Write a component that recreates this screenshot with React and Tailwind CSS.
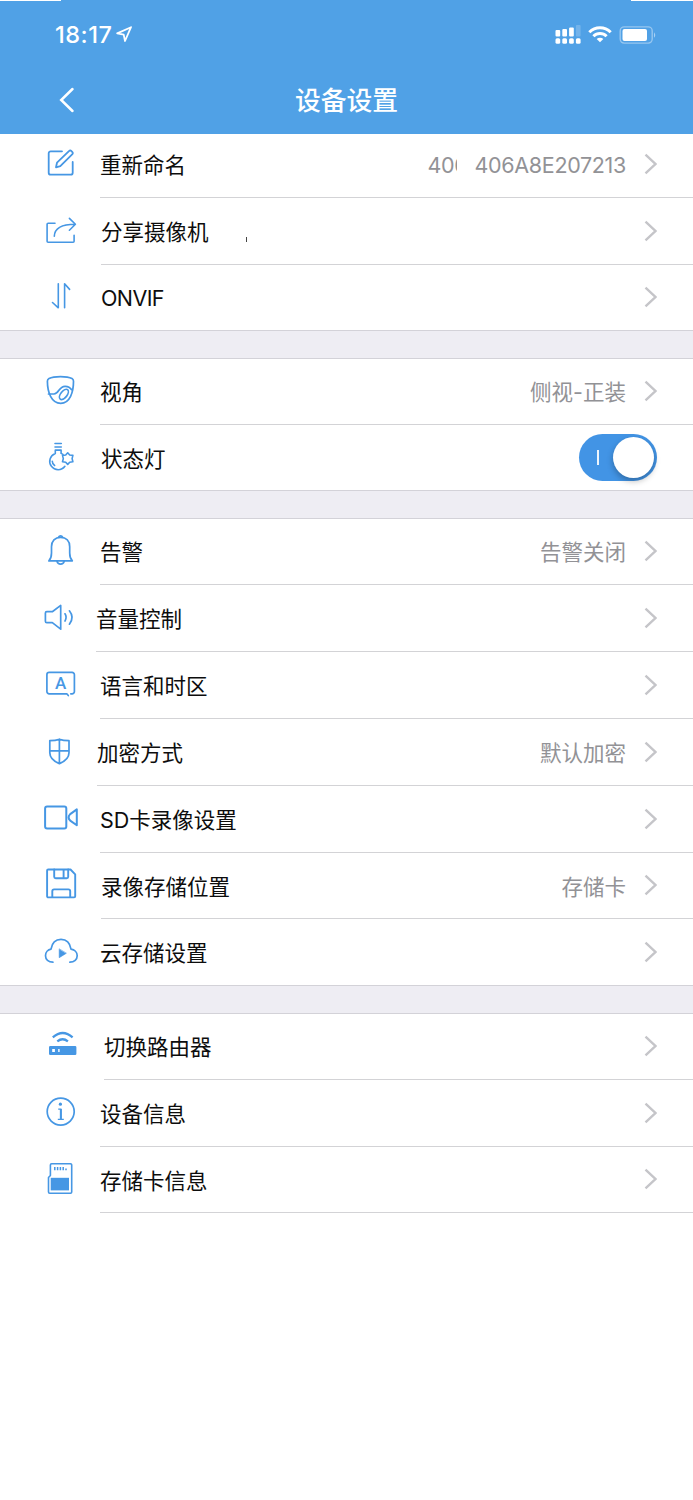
import React from "react";

function Icon({ children, width = 1.5 }) {
  return (
    <svg
      viewBox="0 0 40 40"
      className="mb-[14px] h-10 w-10 shrink-0 self-end text-[#4697e4]"
      fill="none"
      stroke="currentColor"
      strokeWidth={width}
      strokeLinecap="round"
      strokeLinejoin="round"
    >
      {children}
    </svg>
  );
}

const EditIcon = () => (
  <Icon width={1.8}>
    <path d="M22 7.3H10.7a2 2 0 0 0-2 2v19.4a2 2 0 0 0 2 2h20a2 2 0 0 0 2-2V18" />
    <path d="M16 23.3l1-4.6L29.2 6.9a1.4 1.4 0 0 1 2 0l1.2 1.2a1.4 1.4 0 0 1 0 2L20.3 22.2z" />
  </Icon>
);

const ShareIcon = () => (
  <Icon width={1.6}>
    <path d="M15 12.3H8.1a1 1 0 0 0-1 1v16.9a1 1 0 0 0 1 1h25a1 1 0 0 0 1-1V24.3" />
    <path d="M14.3 25.3C14.6 17.2 21.4 13.3 35.2 13.3M29.4 7.4l6 5.9-6 5.9" />
  </Icon>
);

const OnvifIcon = () => (
  <Icon width={1.6}>
    <path d="M18.3 6.8V30.8L12.5 25.5M24.6 30.8V6.8l5 5.6" />
  </Icon>
);

const AngleIcon = () => (
  <Icon width={1.7}>
    <path d="M9 7.6C14 5 27 5 32 7.6Q33.5 8.400 33.500 10.300C33.500 21 30 32.300 20.700 32.300S7.400 21 7.400 10.300Q7.400 8.400 9 7.600z" />
    <path d="M8.500 23h5.500C19 23 18.500 15.500 25 15.300c3.500-.1 5.200 1.200 6.600 3.400" />
    <ellipse cx="23.900" cy="23.400" rx="3.200" ry="6" transform="rotate(38 23.900 23.400)" />
  </Icon>
);

const LampIcon = () => (
  <Icon width={1.6}>
    <path d="M15 6.500h6.300M15 10h6.300M15.300 13.100h5.800M15.300 13.200v3.200a8.400 8.400 0 1 0 9.600 12.900M21.100 13.200v3.200l1.900 1" />
    <path d="M12.300 24.300a5 5 0 0 0 2.300 4.200" />
    <path d="M27.700 15.800l2 2.200 3.200.4-.8 3.200.8 3.200-3.200.4-2 2.200-2-2.200-3.200-.4.8-3.200-.8-3.200 3.200-.4z" />
  </Icon>
);

const BellIcon = () => (
  <Icon width={1.700}>
    <path d="M8.900 29.900c2-2.200 2.600-4.500 2.600-8v-6.200c0-5.800 3.500-9.400 9.100-9.400s9.100 3.600 9.100 9.400v6.200c0 3.500.6 5.800 2.600 8z" />
    <path d="M18.600 6.200a2.200 2.200 0 0 1 4 0M17 30.300a3.700 3.700 0 0 0 7.200 0" />
  </Icon>
);

const VolumeIcon = () => (
  <Icon width={1.700}>
    <path d="M6.800 13.700h5.500l8.400-6.300v23.800l-8.400-6.500H6.800a1.400 1.400 0 0 1-1.400-1.400v-8.200a1.400 1.400 0 0 1 1.400-1.400z" />
    <path d="M25 15.800q2.200 3.500 0 7.200M29.400 12.800q5.400 6.700 0 13.400" />
  </Icon>
);

const LanguageIcon = () => (
  <Icon width={1.700}>
    <path d="M28.300 30.500l-1.500-1.700H9.200a2.300 2.300 0 0 1-2.300-2.300V9.700a2.300 2.300 0 0 1 2.300-2.300h22.900a2.300 2.300 0 0 1 2.300 2.300v16.800a2.300 2.300 0 0 1-2.300 2.300h-1.300" />
    <text x="20.600" y="24.300" fontSize="17" fontWeight="500" textAnchor="middle" fill="currentColor" stroke="none" className="font-['Roboto',sans-serif]">A</text>
  </Icon>
);

const ShieldIcon = () => (
  <Icon width={1.700}>
    <path d="M19.400 7.200c3 1.200 6 1.500 9.600 1.500v12c0 5-4 8.500-9.600 10.900C13.800 29.200 9.800 25.700 9.800 20.700v-12c3.600 0 6.600-.3 9.600-1.500zM19.400 7.200v24.400M9.800 18.900H29" />
  </Icon>
);

const VideoIcon = () => (
  <Icon width={2}>
    <rect x="5.100" y="7.600" width="21.200" height="21.900" rx="2" />
    <path d="M36.800 10.400v15.900l-6.600-4.700q-3.200-3.200 0-6.500z" />
  </Icon>
);

const FloppyIcon = () => (
  <Icon width={1.900}>
    <path d="M8.200 4.500h22.300l4.700 4.900v21.900a1.100 1.100 0 0 1-1.100 1.100H8.200a1.100 1.100 0 0 1-1.100-1.100V5.600a1.100 1.100 0 0 1 1.100-1.100z" />
    <path d="M14.200 4.500v7.300a1.500 1.500 0 0 0 1.500 1.500h11a1.500 1.500 0 0 0 1.500-1.500V4.500M23.600 5v8M12.300 32v-5.800a1.800 1.800 0 0 1 1.800-1.800h14.300a1.800 1.800 0 0 1 1.800 1.800V32" />
  </Icon>
);

const CloudIcon = () => (
  <Icon width={1.700}>
    <path d="M12.900 30.200C8.400 30.200 5.500 27.300 5.500 23.700c0-3.500 2.500-6 5.500-6.500C12 11 15.800 7.400 21 7.400s9 3.600 10 9.800c3.500.5 6.200 3 6.200 6.500 0 3.600-2.900 6.500-7.300 6.500" />
    <path d="M19.200 17.200v8.500l6.900-4.300z" fill="currentColor" strokeWidth="0.600" />
  </Icon>
);

const RouterIcon = () => (
  <Icon width={2.300}>
    <path d="M12.800 11.300q9.900-8.700 19.800 0M17.300 15.400q5.300-4.200 10.600 0" strokeLinecap="butt" />
    <path fillRule="evenodd" clipRule="evenodd" d="M10.300 19.900h24.800a1.300 1.300 0 0 1 1.300 1.300v6.600a1.300 1.300 0 0 1-1.300 1.300H10.300A1.300 1.300 0 0 1 9 27.800v-6.600a1.300 1.300 0 0 1 1.300-1.300zM12.200 23v3h2.700v-3zM18.200 23v3h1.400v-3z" fill="currentColor" stroke="none" />
  </Icon>
);

const InfoIcon = () => (
  <Icon width={1.700}>
    <circle cx="20.700" cy="18.600" r="13.500" />
    <circle cx="20.400" cy="11.200" r="1.600" fill="currentColor" stroke="none" />
    <path d="M18.200 16.200h2.900v9.900M17.800 26.400h6" strokeWidth="1.300" strokeLinecap="butt" />
    <path d="M20.800 16v10" strokeWidth="1.900" strokeLinecap="butt" />
  </Icon>
);

const CardIcon = () => (
  <Icon width={1.600}>
    <path d="M11.600 4.700h18.900a1.200 1.200 0 0 1 1.200 1.200V33a1.200 1.200 0 0 1-1.200 1.200H9.700A1.200 1.200 0 0 1 8.500 33V18.500l1.900-2V5.900a1.200 1.200 0 0 1 1.200-1.200z" />
    <path d="M10.700 18.800h18.300v12.600H10.700z" fill="currentColor" stroke="none" />
    <path d="M14.800 8v3.200M17.600 8v3.200M20.400 8v3.200M23.200 8v3.200M26 9.500v1.700" strokeWidth="1.500" strokeLinecap="butt" />
  </Icon>
);

function Chevron() {
  return (
    <svg viewBox="0 0 13 22" className="mb-[4px] ml-[18px] mr-9 h-[22px] w-[13px] shrink-0" fill="none" stroke="#c5c5c9" strokeWidth="2.400">
      <path d="M1.500 1.700 11.400 11 1.500 20.300" />
    </svg>
  );
}

function Toggle() {
  return (
    <div className="mr-9 mb-[2px] flex h-[47px] w-[78px] items-center justify-between rounded-full bg-[#4294e5] pr-[3px] pl-[18px]">
      <span className="h-[15px] w-[1.500px] bg-white/90" />
      <span className="h-[41px] w-[41px] rounded-full bg-white shadow-[0_3px_6px_rgba(0,0,0,0.28)]" />
    </div>
  );
}

function Row({ icon: IconView, label, indent = "ml-[20px]", height = "h-[67px]", line = true, labelClass = "", extra, children }) {
  return (
    <div className={`flex items-end bg-white pl-10 ${height}`}>
      <IconView />
      <div className={`${indent} flex h-[64px] flex-1 items-center ${line ? "border-b border-[#d3d3d6]" : "pb-px"}`}>
        <span className={`mb-[2px] text-[21.500px] leading-6 whitespace-nowrap text-[#0d0d0d] ${labelClass}`}>{label}</span>
        {extra}
        <div className="ml-auto flex h-full items-center">
          {children}
        </div>
      </div>
    </div>
  );
}

function Value({ children, className = "" }) {
  return <span className={`mb-[2px] block text-[21.500px] leading-6 whitespace-nowrap text-[#929296] ${className}`}>{children}</span>;
}

/* Overlaps the last row of the section above by its one-pixel rule. */
function Gap() {
  return <div className="relative -mt-px h-[29px] border-y border-[#d3d2d8] bg-[#eeedf3]" />;
}

export default function App() {
  return (
    <div className="min-h-[1500px] w-[693px] bg-white font-['Inter','Noto_Sans_CJK_SC',sans-serif]">
      <header className="flex h-[134px] flex-col bg-[#50a1e6] text-white">
        <div className="flex h-px justify-between">
          <span className="w-[61px] bg-white" />
          <span className="w-[62px] bg-white" />
        </div>
        <div className="flex h-[67px] items-center pr-[36px] pl-[55px]">
          <span className="text-[23.500px] leading-6 font-medium tracking-[0.500px]">18:17</span>
          <svg viewBox="0 0 16 16" className="mb-px ml-[4px] h-4 w-4" fill="none" stroke="currentColor" strokeWidth="1.800" strokeLinejoin="round">
            <path d="M15 1.200 1.200 7.400 7.700 8.600 9 15z" />
          </svg>
          <div className="ml-auto flex items-center">
            <svg viewBox="0 0 26 20" className="h-5 w-[26px]" fill="currentColor">
              <rect x="0.500" y="5" width="4.700" height="6.500" rx="1" />
              <rect x="7.300" y="4" width="4.700" height="7.500" rx="1" />
              <rect x="14.100" y="2.500" width="4.700" height="9" rx="1" />
              <rect x="20.900" y="0" width="4.700" height="11.500" rx="1" opacity="0.200" />
              <rect x="0.500" y="13.200" width="4.700" height="5.500" rx="1.500" />
              <rect x="7.300" y="13.200" width="4.700" height="5.500" rx="1.500" />
              <rect x="14.100" y="13.200" width="4.700" height="5.500" rx="1.500" />
              <rect x="20.900" y="13.200" width="4.700" height="5.500" rx="1.500" />
            </svg>
            <svg viewBox="0 0 24 18" className="mb-px ml-[7px] h-[18px] w-6" fill="none" stroke="currentColor" strokeWidth="3">
              <path d="M1.300 7.200a15.200 15.200 0 0 1 21.400 0M5.400 11.300a9.400 9.400 0 0 1 13.200 0" />
              <path d="M12 17.300 8.700 14a4.700 4.700 0 0 1 6.600 0z" fill="currentColor" stroke="none" />
            </svg>
            <svg viewBox="0 0 38 18" className="ml-[7px] h-[18px] w-[38px]" fill="none">
              <rect x="1.200" y="0.900" width="32" height="16.200" rx="4" stroke="white" strokeOpacity="0.400" strokeWidth="1.400" />
              <rect x="3.500" y="3" width="24.500" height="12" rx="2" fill="white" />
              <path d="M35 6.200q2.500 2.800 0 5.600z" fill="white" fillOpacity="0.500" />
            </svg>
          </div>
        </div>
        <div className="grid h-[66px] grid-cols-[1fr_auto_1fr] items-center">
          <svg viewBox="0 0 16 26" className="mb-[3px] ml-[59px] h-[26px] w-4" fill="none" stroke="currentColor" strokeWidth="2.500" strokeLinecap="round">
            <path d="M13.500 2 2.200 13l11.300 11" />
          </svg>
          <h1 className="text-[25.800px] leading-8 font-medium">设备设置</h1>
        </div>
      </header>

      <main>
        <Row icon={EditIcon} label="重新命名" height="h-[64px]">
          <div className="mr-[18px] w-[29px] overflow-hidden">
            <Value className="tracking-[-0.330px]">406</Value>
          </div>
          <Value className="tracking-[-0.330px]">406A8E207213</Value>
          <Chevron />
        </Row>
        <Row
          icon={ShareIcon}
          label="分享摄像机"
          indent="ml-[21px]"
          extra={<span className="mt-[13px] ml-[37px] h-[5px] w-px bg-[#444]" />}
        >
          <Chevron />
        </Row>
        <Row icon={OnvifIcon} label="ONVIF" indent="ml-[21px]" height="h-[66px]" labelClass="pt-px tracking-[-0.600px]" line={false}>
          <Chevron />
        </Row>
        <Gap />
        <Row icon={AngleIcon} label="视角" height="h-[66px]">
          <Value>侧视-正装</Value>
          <Chevron />
        </Row>
        <Row icon={LampIcon} label="状态灯" indent="ml-[21px]" height="h-[66px]" labelClass="pt-[2px]" line={false}>
          <Toggle />
        </Row>
        <Gap />
        <Row icon={BellIcon} label="告警" height="h-[66px]">
          <Value>告警关闭</Value>
          <Chevron />
        </Row>
        <Row icon={VolumeIcon} label="音量控制" indent="ml-[16px]">
          <Chevron />
        </Row>
        <Row icon={LanguageIcon} label="语言和时区">
          <Chevron />
        </Row>
        <Row icon={ShieldIcon} label="加密方式" indent="ml-[17px]">
          <Value>默认加密</Value>
          <Chevron />
        </Row>
        <Row icon={VideoIcon} label="SD卡录像设置">
          <Chevron />
        </Row>
        <Row icon={FloppyIcon} label="录像存储位置" indent="ml-[21px]" height="h-[66px]" labelClass="pt-[2px]">
          <Value className="pt-[2px]">存储卡</Value>
          <Chevron />
        </Row>
        <Row icon={CloudIcon} label="云存储设置" height="h-[67px]" labelClass="pt-px" line={false}>
          <Chevron />
        </Row>
        <Gap />
        <Row icon={RouterIcon} label="切换路由器" indent="ml-[24px]" height="h-[66px]">
          <Chevron />
        </Row>
        <Row icon={InfoIcon} label="设备信息">
          <Chevron />
        </Row>
        <Row icon={CardIcon} label="存储卡信息" height="h-[66px]" labelClass="pt-[2px]">
          <Chevron />
        </Row>
      </main>
    </div>
  );
}
